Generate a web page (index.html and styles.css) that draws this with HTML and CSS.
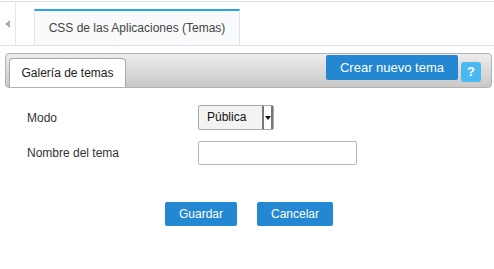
FILE: index.html
```html
<!DOCTYPE html>
<html lang="es">

<head>
  <meta charset="UTF-8" />
  <meta name="viewport" content="width=device-width, initial-scale=1.0" />
  <title>CSS de las Aplicaciones</title>
  <link rel="stylesheet" href="styles.css">
</head>

<body>
  <div class="topbar">
    <div class="nav-arrow"><span class="arrow-left"></span></div>
    <div class="page-tab">CSS de las Aplicaciones (Temas)</div>
  </div>

  <div class="panel-header">
    <div class="panel-tab">Galería de temas</div>
    <button class="btn btn-create">Crear nuevo tema</button>
    <span class="help">?</span>
  </div>

  <div class="form">
    <label class="form-label">Modo</label>
    <div class="select">
      <span class="select-value">Pública</span>
      <span class="select-arrow"></span>
    </div>

    <label class="form-label">Nombre del tema</label>
    <input type="text" class="text-input" />
  </div>

  <div class="actions">
    <button class="btn btn-save">Guardar</button>
    <button class="btn btn-cancel">Cancelar</button>
  </div>
</body>

</html>
```

FILE: styles.css
```css
* {
  box-sizing: border-box;
  margin: 0;
  padding: 0;
}

body {
  font-family: 'Liberation Sans', Arial, sans-serif;
  font-size: 12px;
  color: #333;
  background: #fff;
}

/* top navigation strip */
.topbar {
  display: flex;
  margin-top: 1px;
  height: 45px;
  border-top: 1px solid #dde2e6;
  border-bottom: 1px solid #dde2e6;
}

.nav-arrow {
  width: 16px;
  border-right: 1px solid #e3e6e8;
  display: flex;
  align-items: center;
  justify-content: center;
}

.arrow-left {
  width: 0;
  height: 0;
  border-top: 4px solid transparent;
  border-bottom: 4px solid transparent;
  border-right: 5px solid #a9adb0;
}

.page-tab {
  margin: 7px 0 0 18px;
  width: 206px;
  border-top: 2px solid #29a5e8;
  border-left: 1px solid #dfe4e8;
  border-right: 1px solid #dfe4e8;
  background: #f8fafb;
  display: flex;
  align-items: center;
  justify-content: center;
  font-size: 12px;
  color: #444;
}

/* gray panel header */
.panel-header {
  display: flex;
  align-items: center;
  margin: 7px 2px 0 5px;
  height: 35px;
  border: 1px solid #b3b3b3;
  border-radius: 4px;
  background: linear-gradient(#ededed, #c8c8c8);
  padding-right: 10px;
}

.panel-tab {
  align-self: flex-end;
  margin-left: 3px;
  height: 29px;
  width: 117px;
  background: #fff;
  border: 1px solid #a8a8a8;
  border-bottom: none;
  border-radius: 4px 4px 0 0;
  display: flex;
  align-items: center;
  justify-content: center;
  color: #222;
}

.btn {
  font-family: inherit;
  border: none;
  border-radius: 2px;
  background: #2387d2;
  color: #fff;
  font-size: 12px;
  height: 24px;
  cursor: pointer;
}

.btn-create {
  margin-left: auto;
  width: 132px;
  height: 25px;
  margin-top: -7px;
  font-size: 13px;
}

.help {
  margin-left: 3px;
  width: 20px;
  height: 20px;
  border-radius: 3px;
  background: #4bb9f1;
  color: #fff;
  font-weight: bold;
  font-size: 13px;
  display: flex;
  align-items: center;
  justify-content: center;
  margin-top: 2px;
}

/* form */
.form {
  display: grid;
  grid-template-columns: 171px 159px;
  row-gap: 11px;
  align-items: center;
  margin: 17px 0 0 27px;
}

.form-label {
  color: #333;
}

.select {
  display: flex;
  width: 76px;
  height: 25px;
  border: 1px solid #a9a9a9;
  border-radius: 2px;
  background: #f3f3f3;
}

.select-value {
  flex: 1;
  padding-left: 8px;
  line-height: 23px;
  color: #111;
}

.select-arrow {
  width: 11px;
  background: #fff;
  border-left: 2px solid #777;
  border-right: 2px solid #777;
  position: relative;
}

.select-arrow::after {
  content: "";
  position: absolute;
  left: 1px;
  top: 10px;
  border-left: 3px solid transparent;
  border-right: 3px solid transparent;
  border-top: 4px solid #111;
}

.text-input {
  width: 159px;
  height: 24px;
  border: 1px solid #b3b8bd;
  border-radius: 2px;
  background: #fff;
  outline: none;
}

/* bottom buttons */
.actions {
  display: flex;
  justify-content: center;
  gap: 20px;
  margin-top: 37px;
  padding-left: 4px;
}

.btn-save {
  width: 72px;
}

.btn-cancel {
  width: 76px;
}
```
